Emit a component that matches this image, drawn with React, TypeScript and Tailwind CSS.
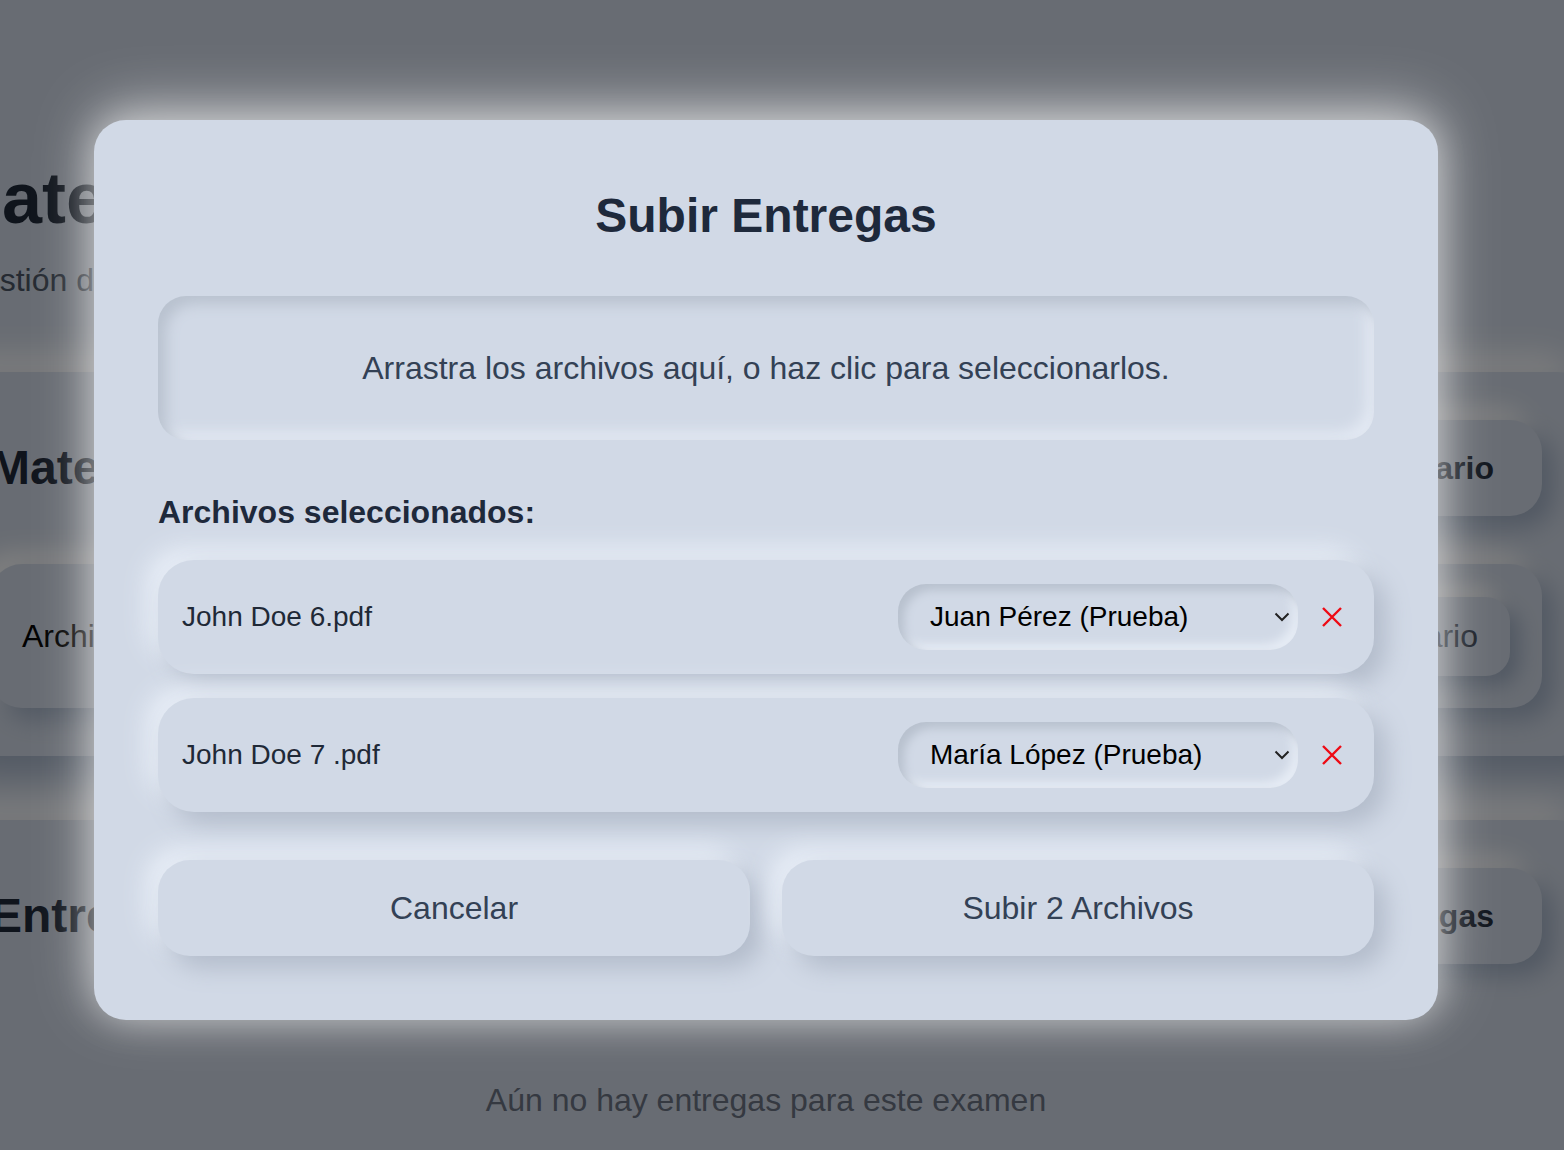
import React from 'react';

const files = [
  { name: 'John Doe 6.pdf', student: 'Juan Pérez (Prueba)' },
  { name: 'John Doe 7 .pdf', student: 'María López (Prueba)' },
];

function Chevron() {
  return (
    <svg className="pointer-events-none absolute right-[8px] top-1/2 -translate-y-1/2" width="16" height="10" viewBox="0 0 16 10" fill="none">
      <path d="M1.5 1.5L8 8L14.5 1.5" stroke="#222" strokeWidth="2" />
    </svg>
  );
}

function RemoveIcon() {
  return (
    <svg width="20" height="20" viewBox="0 0 20 20" fill="none">
      <path d="M1 1L19 19M19 1L1 19" stroke="#ee0a14" strokeWidth="2.4" />
    </svg>
  );
}

function BackgroundPage() {
  return (
    <div className="ml-[-58px] w-[1648px] pt-[158px]">
      {/* Header */}
      <h1 className="text-[72px] leading-[80px] font-bold text-gray-800">Matemáticas Avanzadas</h1>
      <p className="mt-[18px] pl-[15px] text-[32px] leading-[48px] text-gray-600">Gestión de materiales y entregas</p>

      {/* Materiales */}
      <section className="mt-[68px] rounded-[32px] bg-[#d1d9e6] p-12 shadow-[16px_16px_32px_#a3b1c6,-16px_-16px_32px_#ffffff]">
        <div className="flex items-center justify-between">
          <h2 className="text-[48px] leading-[64px] font-bold text-gray-800">Materiales</h2>
          <button className="h-[96px] rounded-[32px] bg-[#d1d9e6] px-12 text-[32px] font-bold text-gray-800 shadow-[12px_12px_24px_#a3b1c6,-12px_-12px_24px_#ffffff]">
            Nuevo Temario
          </button>
        </div>
        <div className="mt-12 flex h-[144px] items-center justify-between rounded-[32px] bg-[#d1d9e6] px-8 shadow-[12px_12px_24px_#a3b1c6,-12px_-12px_24px_#ffffff]">
          <span className="text-[32px] text-black">Archivo del temario</span>
          <button className="h-[79px] rounded-[24px] bg-[#d1d9e6] px-8 text-[32px] text-gray-700 shadow-[10px_10px_20px_#a3b1c6,-10px_-10px_20px_#ffffff]">
            Ver temario
          </button>
        </div>
      </section>

      {/* Entregas */}
      <section className="mt-[64px] h-[400px] rounded-[32px] bg-[#d1d9e6] p-12 shadow-[16px_16px_32px_#a3b1c6,-16px_-16px_32px_#ffffff]">
        <div className="flex items-center justify-between">
          <h2 className="text-[48px] leading-[64px] font-bold text-gray-800">Entregas</h2>
          <button className="h-[96px] rounded-[32px] bg-[#d1d9e6] px-12 text-[32px] font-bold text-gray-800 shadow-[12px_12px_24px_#a3b1c6,-12px_-12px_24px_#ffffff]">
            Subir Entregas
          </button>
        </div>
        <p className="mt-[112px] text-center text-[32px] leading-[48px] text-gray-500">Aún no hay entregas para este examen</p>
      </section>
    </div>
  );
}

export default function App() {
  return (
    <div className="relative h-[1150px] w-full overflow-hidden bg-[#d1d9e6] font-['Liberation_Sans',Arial,sans-serif]">
      <BackgroundPage />

      {/* Modal overlay */}
      <div className="absolute inset-0 flex items-center justify-center bg-black/50 pr-[32px] pb-[10px]">
        <div className="w-[1344px] rounded-[32px] bg-[#d1d9e6] p-16 shadow-[0_-12px_60px_rgba(255,255,255,0.55),0_0_36px_rgba(255,255,255,0.4)]">
          <h2 className="text-center text-[48px] leading-[64px] font-bold text-[#1e293b]">Subir Entregas</h2>

          {/* Dropzone */}
          <div className="mt-12 flex h-[144px] cursor-pointer items-center justify-center rounded-[28px] bg-[#d1d9e6] shadow-[inset_8px_8px_14px_#b9c2cf,inset_-8px_-8px_14px_#e3e9f3]">
            <p className="text-[32px] leading-[48px] text-[#334155]">Arrastra los archivos aquí, o haz clic para seleccionarlos.</p>
          </div>

          <h3 className="mt-12 text-[32px] leading-[48px] font-bold text-[#1e293b]">Archivos seleccionados:</h3>

          <div className="mt-6 flex flex-col gap-6">
            {files.map((f) => (
              <div
                key={f.name}
                className="flex items-center justify-between rounded-[36px] bg-[#d1d9e6] p-6 shadow-[12px_12px_24px_#b3bccb,-12px_-12px_24px_#e8eef7]"
              >
                <span className="text-[28px] leading-[40px] text-[#1f2937]">{f.name}</span>
                <div className="flex items-center gap-4">
                  <div className="relative h-[66px] w-[400px] rounded-[28px] bg-[#d1d9e6] shadow-[inset_6px_6px_10px_#b8c1ce,inset_-6px_-6px_10px_#e6ecf5]">
                    <select
                      defaultValue={f.student}
                      className="h-full w-full appearance-none rounded-[28px] bg-transparent pl-8 pr-10 text-[28px] text-black outline-none"
                    >
                      <option>{f.student}</option>
                    </select>
                    <Chevron />
                  </div>
                  <button className="flex h-[36px] w-[36px] items-center justify-center">
                    <RemoveIcon />
                  </button>
                </div>
              </div>
            ))}
          </div>

          <div className="mt-12 grid grid-cols-2 gap-8">
            <button className="h-[96px] rounded-[32px] bg-[#d1d9e6] text-[32px] text-[#334155] shadow-[12px_12px_24px_#b3bccb,-12px_-12px_24px_#e8eef7]">
              Cancelar
            </button>
            <button className="h-[96px] rounded-[32px] bg-[#d1d9e6] text-[32px] text-[#334155] shadow-[12px_12px_24px_#b3bccb,-12px_-12px_24px_#e8eef7]">
              Subir 2 Archivos
            </button>
          </div>
        </div>
      </div>
    </div>
  );
}
